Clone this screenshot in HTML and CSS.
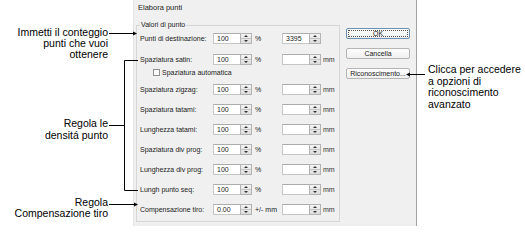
FILE: index.html
```html
<!DOCTYPE html>
<html lang="it">
<head>
  <meta charset="UTF-8">
  <title>Elabora punti</title>
  <link rel="stylesheet" href="styles.css">
</head>
<body>

  <div class="page">
    <div class="dialog">
      <div class="dlg-title">Elabora punti</div>
      <div class="dlg-body">
        <fieldset class="group">
          <legend>Valori di punto</legend>

          <div class="row row-first">
            <span class="lbl">Punti di destinazione:</span>
            <span class="spin"><span class="val">100</span><span class="arrows"><i class="up"></i><i class="down"></i></span></span>
            <span class="unit">%</span>
            <span class="spin"><span class="val">3395</span><span class="arrows"><i class="up"></i><i class="down"></i></span></span>
          </div>

          <div class="row row-satin">
            <span class="lbl">Spaziatura satin:</span>
            <span class="spin"><span class="val">100</span><span class="arrows"><i class="up"></i><i class="down"></i></span></span>
            <span class="unit">%</span>
            <span class="spin"><span class="val"></span><span class="arrows"><i class="up"></i><i class="down"></i></span></span>
            <span class="unit2">mm</span>
          </div>

          <div class="check-row">
            <span class="box"></span>
            <span>Spaziatura automatica</span>
          </div>

          <div class="row row-zigzag">
            <span class="lbl">Spaziatura zigzag:</span>
            <span class="spin"><span class="val">100</span><span class="arrows"><i class="up"></i><i class="down"></i></span></span>
            <span class="unit">%</span>
            <span class="spin"><span class="val"></span><span class="arrows"><i class="up"></i><i class="down"></i></span></span>
            <span class="unit2">mm</span>
          </div>

          <div class="row">
            <span class="lbl">Spaziatura tatami:</span>
            <span class="spin"><span class="val">100</span><span class="arrows"><i class="up"></i><i class="down"></i></span></span>
            <span class="unit">%</span>
            <span class="spin"><span class="val"></span><span class="arrows"><i class="up"></i><i class="down"></i></span></span>
            <span class="unit2">mm</span>
          </div>

          <div class="row">
            <span class="lbl">Lunghezza tatami:</span>
            <span class="spin"><span class="val">100</span><span class="arrows"><i class="up"></i><i class="down"></i></span></span>
            <span class="unit">%</span>
            <span class="spin"><span class="val"></span><span class="arrows"><i class="up"></i><i class="down"></i></span></span>
            <span class="unit2">mm</span>
          </div>

          <div class="row">
            <span class="lbl">Spaziatura div prog:</span>
            <span class="spin"><span class="val">100</span><span class="arrows"><i class="up"></i><i class="down"></i></span></span>
            <span class="unit">%</span>
            <span class="spin"><span class="val"></span><span class="arrows"><i class="up"></i><i class="down"></i></span></span>
            <span class="unit2">mm</span>
          </div>

          <div class="row">
            <span class="lbl">Lunghezza div prog:</span>
            <span class="spin"><span class="val">100</span><span class="arrows"><i class="up"></i><i class="down"></i></span></span>
            <span class="unit">%</span>
            <span class="spin"><span class="val"></span><span class="arrows"><i class="up"></i><i class="down"></i></span></span>
            <span class="unit2">mm</span>
          </div>

          <div class="row">
            <span class="lbl">Lungh punto seq:</span>
            <span class="spin"><span class="val">100</span><span class="arrows"><i class="up"></i><i class="down"></i></span></span>
            <span class="unit">%</span>
            <span class="spin"><span class="val"></span><span class="arrows"><i class="up"></i><i class="down"></i></span></span>
            <span class="unit2">mm</span>
          </div>

          <div class="row">
            <span class="lbl">Compensazione tiro:</span>
            <span class="spin"><span class="val">0.00</span><span class="arrows"><i class="up"></i><i class="down"></i></span></span>
            <span class="unit">+/- mm</span>
            <span class="spin"><span class="val"></span><span class="arrows"><i class="up"></i><i class="down"></i></span></span>
            <span class="unit2">mm</span>
          </div>
        </fieldset>

        <div class="buttons">
          <button class="btn btn-default">OK</button>
          <button class="btn">Cancella</button>
          <button class="btn">Riconoscimento...</button>
        </div>
      </div>
    </div>

    <!-- callouts -->
    <div class="note note-left note-count">Immetti il conteggio<br>punti che vuoi<br>ottenere</div>
    <div class="note note-left note-density">Regola le<br>densitá punto</div>
    <div class="note note-left note-comp">Regola<br>Compensazione tiro</div>
    <div class="note note-right">Clicca per accedere<br>a opzioni di<br>riconoscimento<br>avanzato</div>

    <svg class="leaders" width="525" height="241" viewBox="0 0 525 241">
      <g stroke="#000" stroke-width="1" fill="none">
        <path d="M109 33.5H134"/>
        <path d="M109 125.5H124.5M138 60.5H124.5V190.5H138"/>
        <path d="M109 204.5H135"/>
        <path d="M425 74.5H409"/>
      </g>
      <g fill="#000">
        <path d="M137 33.5l-4-2v4z"/>
        <path d="M138 204.5l-4-2v4z"/>
        <path d="M406 74.5l4-2v4z"/>
      </g>
    </svg>
  </div>

</body>
</html>
```

FILE: styles.css
```css
body {
  margin: 0;
  background: #fff;
  font-family: 'Liberation Sans', Arial, sans-serif;
}
.page {
  position: relative;
  width: 525px;
  height: 241px;
  overflow: hidden;
}

/* dialog */
.dialog {
  margin-left: 133px;
  width: 284px;
  height: 226px;
  box-sizing: border-box;
  background: #f0f0f0;
  border-left: 1px solid #e2e2e2;
  border-right: 1px solid #a3a3a3;
  color: #222;
  font-size: 7px;
}
.dlg-title {
  height: 21px;
  line-height: 16px;
  padding-left: 4px;
  font-size: 7.5px;
}
.dlg-body {
  display: flex;
  align-items: flex-start;
}
.group {
  margin: 0 0 0 2px;
  padding: 0 0 2px 3px;
  width: 204px;
  min-width: 0;
  box-sizing: border-box;
  border: 1px solid #d6d6d6;
}
.group legend {
  padding: 0 1px;
  margin-left: 0;
  line-height: 8px;
  font-size: 7px;
}
.row {
  display: grid;
  grid-template-columns: 73px 39px 30px 39px auto;
  align-items: center;
  height: 20px;
}
.row-first {
  height: 18px;
}
.row-satin {
  margin-top: 5px;
  height: 15px;
}
.row-zigzag {
  margin-top: 2px;
}
.unit {
  padding-left: 3px;
}
.unit2 {
  padding-left: 2px;
  color: #333;
}

/* spin box */
.spin {
  display: flex;
  height: 11px;
}
.val {
  flex: 1;
  background: #fff;
  border: 1px solid #c6c6c6;
  border-top-color: #acacac;
  border-right: none;
  padding-left: 3px;
  line-height: 9px;
}
.arrows {
  width: 12px;
  box-sizing: border-box;
  display: flex;
  flex-direction: column;
  border: 1px solid #b3b3b3;
  background: linear-gradient(#f4f4f4, #dcdcdc);
}
.arrows i {
  flex: 1;
  display: flex;
  align-items: center;
  justify-content: center;
}
.arrows i.up {
  border-bottom: 1px solid #c4c4c4;
}
.arrows i.up::after {
  content: "";
  border-left: 2px solid transparent;
  border-right: 2px solid transparent;
  border-bottom: 2px solid #333;
}
.arrows i.down::after {
  content: "";
  border-left: 2px solid transparent;
  border-right: 2px solid transparent;
  border-top: 2px solid #333;
}

/* checkbox */
.check-row {
  display: flex;
  align-items: center;
  gap: 2px;
  height: 10px;
  padding-left: 13px;
}
.check-row .box {
  width: 7px;
  height: 7px;
  box-sizing: border-box;
  background: #fff;
  border: 1px solid #8f8f8f;
}

/* buttons */
.buttons {
  display: flex;
  flex-direction: column;
  gap: 9px;
  margin-left: 6px;
  padding-top: 7px;
}
.btn {
  width: 64px;
  height: 11px;
  padding: 0;
  font-family: inherit;
  font-size: 7px;
  line-height: 9px;
  color: #222;
  background: linear-gradient(#fdfdfd, #f0f0f0);
  border: 1px solid #b4b4b4;
  border-radius: 2px;
}
.btn-default {
  border-color: #6a8fb3;
  outline: 1px dotted #555;
  outline-offset: -3px;
}

/* callouts */
.note {
  position: absolute;
  font-size: 10.5px;
  line-height: 11px;
  color: #000;
}
.note-left {
  right: 417px;
  text-align: right;
}
.note-count {
  top: 27px;
}
.note-density {
  top: 117px;
  line-height: 12px;
}
.note-comp {
  top: 197px;
}
.note-right {
  left: 428px;
  top: 64px;
  line-height: 11.5px;
}
.leaders {
  position: absolute;
  left: 0;
  top: 0;
}
```
